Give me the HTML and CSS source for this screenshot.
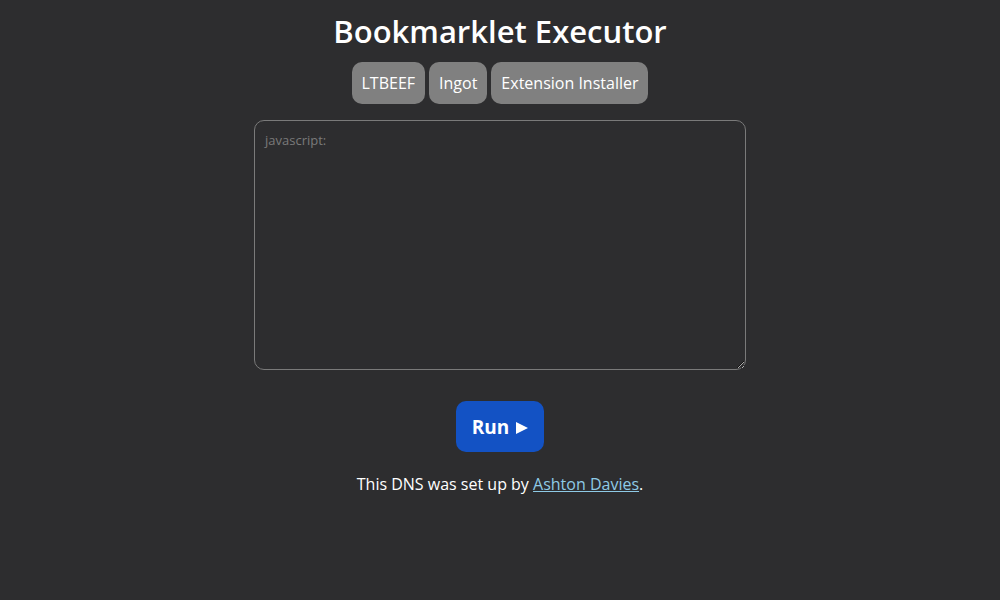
FILE: index.html
```html
<!DOCTYPE html>
<html>
<head>
<meta charset="utf-8">
<link rel="stylesheet" href="styles.css">
</head>
<body>
<main class="page">
  <h1 class="title">Bookmarklet Executor</h1>
  <nav class="links">
    <a class="pill" href="#">LTBEEF</a>
    <a class="pill" href="#">Ingot</a>
    <a class="pill" href="#">Extension Installer</a>
  </nav>
  <textarea class="code" placeholder="javascript:"></textarea>
  <button class="run">Run<span class="run-icon"></span></button>
  <p class="credit">This DNS was set up by <a class="credit-link" href="#">Ashton Davies</a>.</p>
</main>
</body>
</html>
```
FILE: styles.css
```css
html, body {
  margin: 0;
  padding: 0;
  background: #2d2d2f;
  color: #ffffff;
  font-family: "Open Sans", sans-serif;
}
.page {
  display: flex;
  flex-direction: column;
  align-items: center;
  padding-top: 10px;
}
.title {
  margin: 0;
  font-size: 31px;
  font-weight: 600;
  line-height: 42px;
}
.links {
  display: flex;
  gap: 4px;
  margin-top: 10px;
}
.pill {
  display: block;
  background: #808080;
  color: #ffffff;
  text-decoration: none;
  font-size: 16px;
  line-height: 22px;
  padding: 10px 10px;
  border-radius: 10px;
}
.code {
  box-sizing: border-box;
  width: 492px;
  height: 250px;
  margin-top: 16px;
  background: #2d2d2f;
  border: 1px solid #7a7a7a;
  border-radius: 10px;
  padding: 10px;
  color: #ffffff;
  font-family: "Open Sans", sans-serif;
  font-size: 13px;
  resize: vertical;
  outline: none;
}
.code::placeholder {
  color: #7a7a7a;
}
.run {
  display: flex;
  align-items: center;
  justify-content: center;
  margin-top: 31px;
  width: 88px;
  height: 51px;
  padding: 0;
  background: #1352c4;
  color: #ffffff;
  border: none;
  border-radius: 10px;
  font-family: "Open Sans", sans-serif;
  font-size: 19px;
  font-weight: 700;
}
.run-icon {
  width: 0;
  height: 0;
  margin-left: 7px;
  margin-top: 2px;
  border-left: 12px solid #ffffff;
  border-top: 6px solid transparent;
  border-bottom: 6px solid transparent;
}
.credit {
  margin: 21px 0 0;
  font-size: 16px;
  line-height: 22px;
}
.credit-link {
  color: #8ecae6;
}
```
